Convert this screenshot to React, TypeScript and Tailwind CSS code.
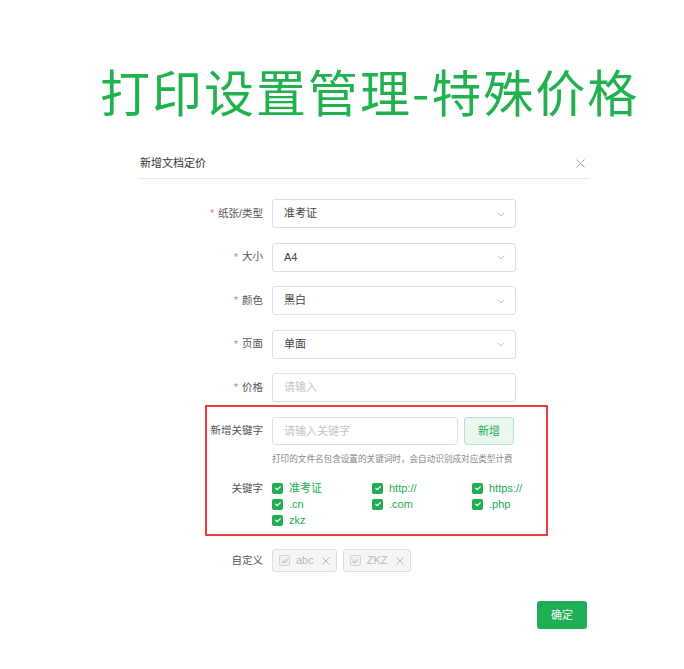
import React from "react";

const FONT = { fontFamily: '"Liberation Sans", "Noto Sans CJK SC", sans-serif' };

function Chevron() {
  return (
    <svg width="10" height="10" viewBox="0 0 10 10" className="text-[#c0c4cc]">
      <path d="M1.5 3.5 L5 7 L8.5 3.5" fill="none" stroke="currentColor" strokeWidth="1" />
    </svg>
  );
}

function CheckBox({ disabled }: { disabled?: boolean }) {
  return (
    <span
      className={
        disabled
          ? "flex h-[11px] w-[11px] items-center justify-center rounded-[2px] border border-[#d4d4d4] bg-[#eef0f3]"
          : "flex h-[11px] w-[11px] items-center justify-center rounded-[2px] bg-[#21ad52]"
      }
    >
      <svg width="8" height="8" viewBox="0 0 8 8">
        <path
          d="M1.5 4 L3.3 5.7 L6.6 2.3"
          fill="none"
          stroke={disabled ? "#b8bcc4" : "#ffffff"}
          strokeWidth="1.2"
        />
      </svg>
    </span>
  );
}

function Label({ text, required }: { text: string; required?: boolean }) {
  return (
    <div className="flex w-[263px] shrink-0 items-center justify-end whitespace-nowrap text-[10.5px] text-[#555]">
      {required && <span className="mr-[4px] text-[10px] text-[#f56c6c]">*</span>}
      {text}
    </div>
  );
}

function SelectRow({ label, value }: { label: string; value: string }) {
  return (
    <div className="flex h-[29px] items-center">
      <Label text={label} required />
      <div className="ml-[9px] flex h-[29px] w-[244px] items-center justify-between rounded-[3px] border border-[#dcdfe6] pl-[11px] pr-[9px] text-[11px] text-[#444]">
        <span>{value}</span>
        <Chevron />
      </div>
    </div>
  );
}

const keywords = ["准考证", "http://", "https://", ".cn", ".com", ".php", "zkz"];

export default function App() {
  return (
    <div className="relative h-[669px] w-[684px] overflow-hidden bg-white" style={FONT}>
      <h1
        className="pl-[100px] pt-[60px] text-[50px] leading-[60px] tracking-[2px] text-[#22b14f]"
        style={{ fontFamily: '"Noto Sans CJK SC", sans-serif' }}
      >
        打印设置管理-特殊价格
      </h1>

      <div className="ml-[138px] mt-[23px] w-[452px]">
        <div className="flex h-[36px] items-center justify-between border-b border-[#e8e8e8] pl-[2px] pr-[5px] pt-[5px]">
          <span className="text-[11px] text-[#333]">新增文档定价</span>
          <svg width="9" height="9" viewBox="0 0 9 9">
            <path d="M0.5 0.5 L8.5 8.5 M8.5 0.5 L0.5 8.5" stroke="#aaa" strokeWidth="1" />
          </svg>
        </div>
      </div>

      <div className="mt-[20px] flex flex-col gap-[14.5px]">
        <SelectRow label="纸张/类型" value="准考证" />
        <SelectRow label="大小" value="A4" />
        <SelectRow label="颜色" value="黑白" />
        <SelectRow label="页面" value="单面" />
        <div className="flex h-[29px] items-center">
          <Label text="价格" required />
          <div className="ml-[9px] flex h-[29px] w-[244px] items-center rounded-[3px] border border-[#dcdfe6] pl-[11px] text-[11px] text-[#c0c4cc]">
            请输入
          </div>
        </div>
      </div>

      <div className="ml-[205px] mt-[3px] h-[131px] w-[343px] border-2 border-[#f43b3b]">
        <div className="mt-[10px] flex items-center">
          <div className="w-[56px] shrink-0 whitespace-nowrap text-right text-[10.5px] text-[#555]">新增关键字</div>
          <div className="ml-[9px] flex h-[28px] w-[186px] items-center rounded-[3px] border border-[#dcdfe6] pl-[11px] text-[11px] text-[#c0c4cc]">
            请输入关键字
          </div>
          <div className="ml-[6px] flex h-[28px] w-[50px] items-center justify-center rounded-[3px] border border-[#b5e5c3] bg-[#e9f7ee] text-[11px] text-[#21ad52]">
            新增
          </div>
        </div>
        <div className="ml-[65px] mt-[7px] whitespace-nowrap text-[8.6px] leading-[14px] text-[#888]">
          打印的文件名包含设置的关键词时，会自动识别成对应类型计费
        </div>
        <div className="mt-[14px] flex">
          <div className="w-[56px] shrink-0 text-right text-[10.5px] leading-[16px] text-[#555]">关键字</div>
          <div className="ml-[9px] grid grid-cols-[100px_100px_80px]">
            {keywords.map((k) => (
              <div key={k} className="flex h-[16px] items-center gap-[6px]">
                <CheckBox />
                <span className="text-[11px] text-[#21ad52]">{k}</span>
              </div>
            ))}
          </div>
        </div>
      </div>

      <div className="mt-[13px] flex items-center">
        <div className="w-[263px] shrink-0 text-right text-[10.5px] text-[#555]">自定义</div>
        <div className="ml-[9px] flex gap-[6px]">
          {["abc", "ZKZ"].map((t) => (
            <div
              key={t}
              className="flex h-[23px] items-center gap-[6px] rounded-[3px] border border-[#dcdfe6] bg-[#f5f6f8] px-[6px] text-[11px] text-[#b4b8bf]"
            >
              <CheckBox disabled />
              <span>{t}</span>
              <svg width="8" height="8" viewBox="0 0 8 8" className="ml-[2px]">
                <path d="M0.5 0.5 L7.5 7.5 M7.5 0.5 L0.5 7.5" stroke="#b4b8bf" strokeWidth="1" />
              </svg>
            </div>
          ))}
        </div>
      </div>

      <div className="mt-[29px] flex justify-end pr-[97px]">
        <div className="flex h-[28px] w-[50px] items-center justify-center rounded-[3px] bg-[#1fae54] text-[11px] text-white">
          确定
        </div>
      </div>
    </div>
  );
}
